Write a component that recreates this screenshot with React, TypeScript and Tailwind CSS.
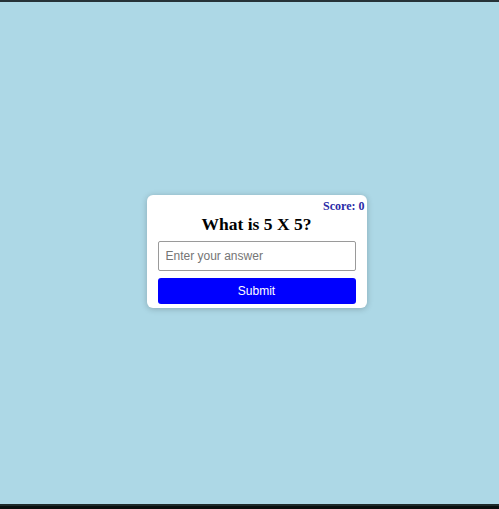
export default function App() {
  return (
    <div className="w-[499px] h-[509px] flex flex-col bg-[#add8e6]">
      <div className="h-[2px] bg-[#263238]" />
      <div className="flex-1 flex items-center justify-center pl-[14px] pb-[4px]">
        <div className="w-[220px] bg-white rounded-[6px] shadow-[0_1px_6px_rgba(0,0,0,0.22)] px-[11px] pt-[4px] pb-[4px] flex flex-col">
          <div className="flex justify-end -mr-[9px] h-[14px] items-center">
            <span className="text-[12px] font-bold text-[#2a2aa6] leading-none" style={{ fontFamily: '"Liberation Serif", serif' }}>
              Score: 0
            </span>
          </div>
          <div className="h-[24px] flex items-center justify-center">
            <h2 className="text-[17.5px] font-bold text-black leading-none" style={{ fontFamily: '"Liberation Serif", serif' }}>
              What is 5 X 5?
            </h2>
          </div>
          <input
            type="text"
            placeholder="Enter your answer"
            className="mt-[4px] h-[30px] w-full border border-[#9a9a9a] rounded-[2px] px-[7px] text-[12px] placeholder:text-[#757575] outline-none"
            style={{ fontFamily: '"Liberation Sans", Arial, sans-serif' }}
          />
          <button
            className="mt-[7px] h-[26px] w-full bg-[#0000ff] text-white text-[12px] rounded-[3px]"
            style={{ fontFamily: '"Liberation Sans", Arial, sans-serif' }}
          >
            Submit
          </button>
        </div>
      </div>
      <div className="h-[2px] bg-[#1e2a2a]" />
      <div className="h-[3px] bg-[#0a0f0f]" />
    </div>
  );
}
